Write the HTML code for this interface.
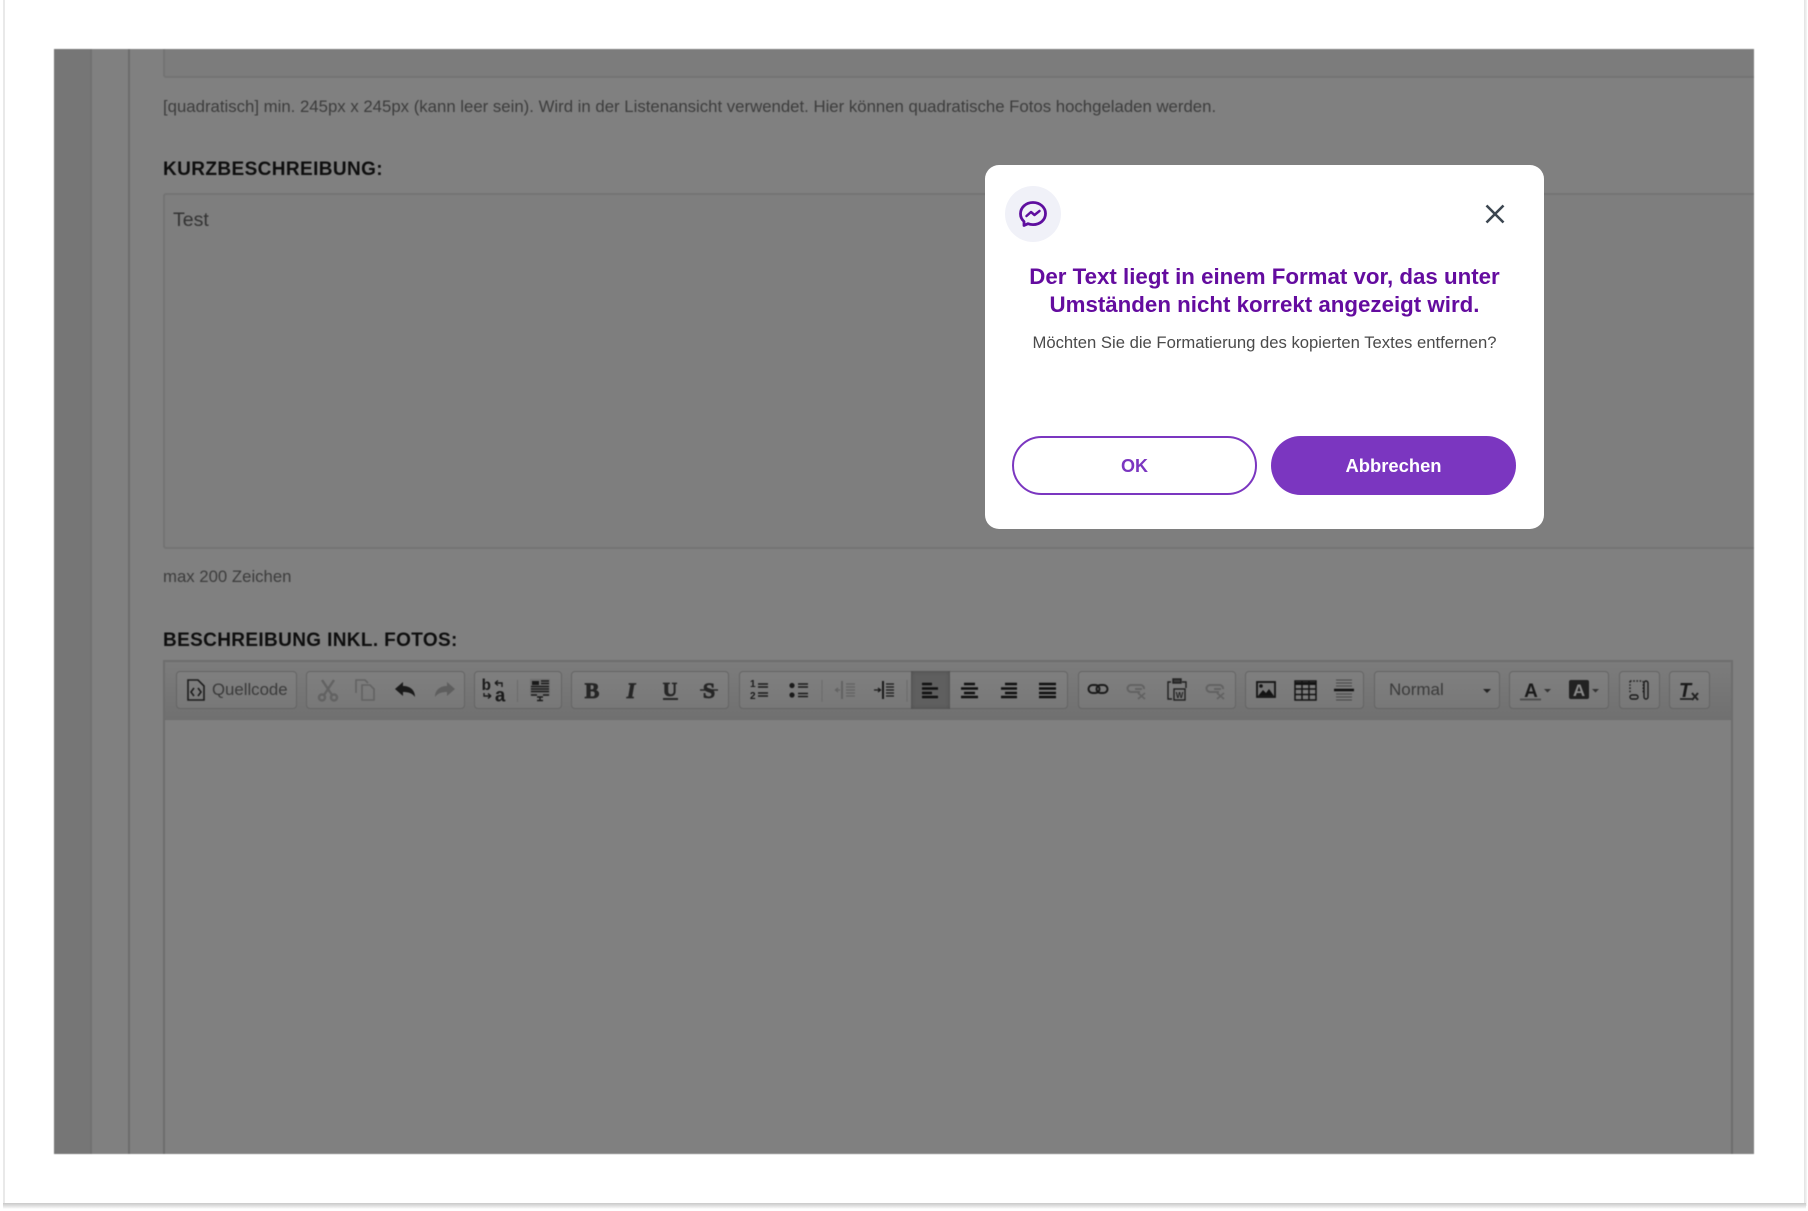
<!DOCTYPE html>
<html lang="de"><head><meta charset="utf-8"><title>Dialog</title>
<style>
html,body{margin:0;padding:0;width:1808px;height:1211px;overflow:hidden;background:#fff;font-family:"Liberation Sans",Arial,sans-serif}
.a{position:absolute;box-sizing:border-box}
.t{position:absolute;white-space:nowrap;line-height:20px}
.grp{position:absolute;top:671px;height:38px;box-sizing:border-box;border:1px solid #646464;border-radius:4px;background:linear-gradient(#7f7f7f,#787878)}
#bg{filter:blur(.4px)}
#mt{filter:blur(.25px)}
</style></head><body>
<div class="a" style="left:3px;top:0;width:2px;height:1204px;background:#e9e9e9"></div>
<div class="a" style="left:1804px;top:0;width:3px;height:1206px;background:linear-gradient(90deg,#e2e2e2,#f6f6f6)"></div>
<div class="a" style="left:3px;top:1203px;width:1803px;height:6px;background:linear-gradient(#c9c9c9,#e6e6e6 60%,#fff)"></div>

<div id="bg" class="a" style="left:0;top:0;width:1808px;height:1211px">
<div class="a" style="left:54px;top:49px;width:1700px;height:1105px;background:#808080;overflow:hidden">
  <div class="a" style="left:0;top:0;width:38px;height:1105px;background:#767676;border-right:2px solid #717171"></div>
  <div class="a" style="left:74px;top:0;width:2px;height:1105px;background:#6c6c6c"></div>
  <div class="a" style="left:109px;top:-5px;width:1600px;height:34px;background:#7c7c7c;border:2px solid #737373;border-radius:3px"></div>
  <div class="a" style="left:109px;top:144px;width:1600px;height:356px;background:#7e7e7e;border:2px solid #737373;border-radius:3px"></div>
</div>
<div class="t" style="left:163px;top:97px;font-size:16.78px;color:#3c3c3c">[quadratisch] min. 245px x 245px (kann leer sein). Wird in der Listenansicht verwendet. Hier können quadratische Fotos hochgeladen werden.</div>
<div class="t" style="left:163px;top:160px;font-size:19px;font-weight:bold;color:#0e0e0e;letter-spacing:.4px">KURZBESCHREIBUNG:</div>
<div class="t" style="left:173px;top:210px;font-size:19.5px;color:#333">Test</div>
<div class="t" style="left:163px;top:567px;font-size:16.75px;color:#3c3c3c">max 200 Zeichen</div>
<div class="t" style="left:163px;top:631px;font-size:19px;font-weight:bold;color:#0e0e0e;letter-spacing:.36px">BESCHREIBUNG INKL. FOTOS:</div>

<div class="a" style="left:163px;top:660px;width:1570px;height:61px;border:2px solid #6d6d6d;background:linear-gradient(#7c7c7c,#707070)"></div>
<div class="a" style="left:163px;top:720px;width:1570px;height:434px;border-left:2px solid #6d6d6d;border-right:2px solid #6d6d6d;background:#808080"></div>

<div class="grp" style="left:176px;width:121px"></div>
<div class="grp" style="left:306px;width:159px"></div>
<div class="grp" style="left:474px;width:88px"></div>
<div class="grp" style="left:571px;width:158px"></div>
<div class="grp" style="left:739px;width:329px"></div>
<div class="a" style="left:911px;top:671px;width:39px;height:38px;background:#5f5f5f;box-shadow:inset 0 0 4px #4a4a4a"></div>
<div class="grp" style="left:1078px;width:158px"></div>
<div class="grp" style="left:1245px;width:119px"></div>
<div class="grp" style="left:1374px;width:126px"></div>
<div class="grp" style="left:1509px;width:100px"></div>
<div class="grp" style="left:1619px;width:41px"></div>
<div class="grp" style="left:1669px;width:41px"></div>

<div class="t" style="left:212px;top:680px;font-size:16.8px;color:#3a3a3a">Quellcode</div>
<div class="t" style="left:1389px;top:680px;font-size:17px;color:#3a3a3a">Normal</div>

<svg class="a" style="left:0;top:0" width="1808" height="1211" viewBox="0 0 1808 1211" fill="none">
 <!-- source -->
 <g transform="translate(196,690)" stroke="#1c1c1c" stroke-width="1.6"><path d="M-8-10H2L8-4V10H-8Z"/><path d="M-2-2L-5 2L-2 6M2-2L5 2L2 6"/></g>
 <!-- cut -->
 <g transform="translate(328,690)" stroke="#626262" stroke-width="2.4"><path d="M-6-10L4 5M6-10L-4 5"/><circle cx="-6" cy="7.5" r="3"/><circle cx="6" cy="7.5" r="3"/></g>
 <!-- copy -->
 <g transform="translate(365,690)" stroke="#626262" stroke-width="1.6"><path d="M-9 3V-10H0L3-7"/><path d="M-3-5H5L9-1V10H-3Z"/></g>
 <!-- undo/redo -->
 <path transform="translate(405,690)" fill="#1a1a1a" d="M-10-1L-2-8V-4C5-4 10 0 10 7C7 3 3 2-2 2V6Z"/>
 <path transform="translate(445,690) scale(-1,1)" fill="#5e5e5e" d="M-10-1L-2-8V-4C5-4 10 0 10 7C7 3 3 2-2 2V6Z"/>
 <!-- bidi -->
 <g transform="translate(493,690)">
  <text x="-11.500" y="0" font-family="Liberation Mono" font-weight="bold" font-size="16" fill="#1a1a1a">b</text>
  <text x="1.500" y="11.500" font-family="Liberation Mono" font-weight="bold" font-size="19" fill="#1a1a1a">a</text>
  <path d="M2-7H9V-3M2-7L5-9.500M2-7L5-4.500M-9 3V6H-2M-2 6L-5 3.500M-2 6L-5 8.500" stroke="#1a1a1a" stroke-width="1.4"/>
 </g>
 <path d="M517.500 680V702" stroke="#6a6a6a" stroke-width="1"/>
 <!-- template -->
 <g transform="translate(540,689)"><rect x="-10" y="-10" width="20" height="17" fill="#6f6f6f"/><path d="M-8-8H-1V-4H-8Z" fill="#1a1a1a"/><path d="M1-8H9M1-5.500H9M-9-2.500H9M-9 0H9M-9 2.500H9" stroke="#1a1a1a" stroke-width="1.400"/><path d="M-9 6H-3M3 6H9M-3 8H3M0 8V11.500M-3 11.500H3" stroke="#1a1a1a" stroke-width="1.400"/></g>
 <!-- B I U S -->
 <g font-family="Liberation Serif" font-weight="bold" font-size="22" text-anchor="middle" fill="#262626" stroke="#262626" stroke-width=".8">
  <text x="592" y="698">B</text>
  <text x="631" y="698" font-style="italic">I</text>
  <text x="670" y="696" font-size="20">U</text>
  <text x="709" y="698">S</text>
 </g>
 <path d="M663 699H678" stroke="#262626" stroke-width="2"/>
 <path d="M700 690H718" stroke="#262626" stroke-width="1.600"/>
 <!-- lists -->
 <g transform="translate(759,690)"><text x="-9" y="-3" font-family="Liberation Sans" font-weight="bold" font-size="10" fill="#1a1a1a">1</text><text x="-9" y="9" font-family="Liberation Sans" font-weight="bold" font-size="10" fill="#1a1a1a">2</text><path d="M-1-6H9M-1-3H9M-1 3H9M-1 6H9" stroke="#1a1a1a" stroke-width="1.600"/></g>
 <g transform="translate(799,690)"><circle cx="-7" cy="-4.500" r="2.600" fill="#1a1a1a"/><circle cx="-7" cy="5" r="2.600" fill="#1a1a1a"/><path d="M-1-6H9M-1-3H9M-1 3.500H9M-1 6.500H9" stroke="#1a1a1a" stroke-width="1.600"/></g>
 <path d="M822 680V702M907 680V702" stroke="#6a6a6a"/>
 <g transform="translate(845,690)" stroke="#626262" stroke-width="1.300"><path d="M-3-9V9" stroke-width="2"/><path d="M1-6H10M1-3H10M1 0H10M1 3H10M1 6H10M-10 0H-5M-7-2L-9.500 0L-7 2"/></g>
 <g transform="translate(884,690)" stroke="#1a1a1a" stroke-width="1.300"><path d="M-1-9V9" stroke-width="2"/><path d="M2-6H10M2-3H10M2 0H10M2 3H10M2 6H10M-10 0H-4M-6-2L-3.500 0L-6 2"/></g>
 <!-- align -->
 <g stroke="#101010" stroke-width="2.500">
  <path d="M922 684H932M922 688.500H938M922 693H932M922 697H938"/>
  <path d="M964 684H975M961 688.500H978M964 693H975M961 697H978"/>
  <path d="M1005 684H1017M1001 688.500H1017M1005 693H1017M1001 697H1017"/>
  <path d="M1039 684H1056M1039 688.500H1056M1039 693H1056M1039 697H1056"/>
 </g>
 <!-- link -->
 <g transform="translate(1098,689)" stroke="#1a1a1a" stroke-width="2"><rect x="-9.500" y="-4" width="11" height="8" rx="4"/><rect x="-1.500" y="-4" width="11" height="8" rx="4"/></g>
 <g transform="translate(1137,689)" stroke="#626262" stroke-width="2"><path d="M3 3H-6A3.500 3.500 0 0 1-6-4H4A3.500 3.500 0 0 1 7 0M-2 0H5"/><path d="M1 4L8 10M8 4L1 10" stroke-width="1.800"/></g>
 <g transform="translate(1177,689)" stroke="#1f1f1f" stroke-width="1.400"><path d="M-6-7H-9V10H-5M5-7H9V-1"/><rect x="-4" y="-10" width="8" height="4" fill="#3a3a3a"/><rect x="-3" y="0" width="11" height="11"/><text x="2.500" y="9" font-family="Liberation Sans" font-weight="bold" font-size="8" text-anchor="middle" fill="#1f1f1f" stroke="none">W</text></g>
 <g transform="translate(1216,689)" stroke="#626262" stroke-width="2"><path d="M3 3H-6A3.500 3.500 0 0 1-6-4H4A3.500 3.500 0 0 1 7 0M-2 0H5"/><path d="M1 4L8 10M8 4L1 10" stroke-width="1.800"/></g>
 <!-- image -->
 <g transform="translate(1266,690)"><rect x="-9" y="-8" width="18" height="15" fill="#757575" stroke="#141414" stroke-width="1.800"/><circle cx="-5" cy="-4" r="1.800" fill="#141414"/><path d="M-8 6L-3 0L0 3L3-1L8 6Z" fill="#141414"/></g>
 <!-- table -->
 <g transform="translate(1305,690)" stroke="#141414" stroke-width="1.500"><rect x="-10" y="-9" width="21" height="19"/><path d="M-10-6.500H11" stroke-width="3"/><path d="M-10-1H11M-10 4.500H11M-3-9V10M4-9V10"/></g>
 <!-- hr -->
 <g transform="translate(1344,690)" stroke="#484848" stroke-width="1"><path d="M-8-10H8M-8-7H8M-8-4H8M-8 4H8M-8 7H8M-8 10H8"/><path d="M-10 0H10" stroke="#101010" stroke-width="2.400"/></g>
 <!-- combo arrow -->
 <path d="M1483 689H1491L1487 693Z" fill="#222"/>
 <!-- colors -->
 <text x="1531" y="697" font-family="Liberation Sans" font-weight="bold" font-size="19" text-anchor="middle" fill="#1a1a1a">A</text>
 <path d="M1520 699.500H1541" stroke="#4e4e4e" stroke-width="2"/>
 <path d="M1544 689H1551L1547.500 692.500Z" fill="#333"/>
 <rect x="1569" y="680" width="20" height="19" rx="2" fill="#222"/>
 <text x="1579" y="696" font-family="Liberation Sans" font-weight="bold" font-size="17" text-anchor="middle" fill="#8a8a8a">A</text>
 <path d="M1592 689H1599L1595.500 692.500Z" fill="#333"/>
 <!-- maximize -->
 <g transform="translate(1639,690)"><path d="M-9-9H4M-9-9V3" stroke="#222" stroke-width="1.500" stroke-dasharray="1.600 1.600"/><path d="M4-9V3" stroke="#222" stroke-width="1" stroke-dasharray="1.600 1.600"/><rect x="-9" y="5" width="8" height="4" rx="2" stroke="#1a1a1a" stroke-width="1.400"/><rect x="5" y="-9" width="4" height="18" rx="2" stroke="#1a1a1a" stroke-width="1.400"/></g>
 <!-- remove format -->
 <text x="1685" y="697" font-family="Liberation Sans" font-weight="bold" font-style="italic" font-size="20" text-anchor="middle" fill="#1a1a1a">T</text>
 <path d="M1680 699H1692" stroke="#1a1a1a" stroke-width="1.600"/>
 <path d="M1692 693L1698 700M1698 693L1692 700" stroke="#222" stroke-width="2"/>
</svg>
</div>

<!-- modal -->
<div class="a" style="left:984.500px;top:165px;width:559px;height:364px;background:#fff;border-radius:14px"></div>
<div class="a" style="left:1005px;top:186px;width:56px;height:56px;border-radius:50%;background:#f0f1f8"></div>
<svg class="a" style="left:1005px;top:186px" width="56" height="56" viewBox="0 0 56 56" fill="none">
 <path d="M28 16.500C20.800 16.500 15.500 21.500 15.500 27.800C15.500 31 16.800 33.600 19 35.500V39.500L23 37.700C24.500 38.300 26.200 38.600 28 38.600C35.200 38.600 40.500 33.800 40.500 27.500C40.500 21.500 35.200 16.500 28 16.500Z" stroke="#5f0f9f" stroke-width="2.800" stroke-linejoin="round"/>
 <path d="M21.500 30L26 26L29.500 29L34.500 25" stroke="#5f0f9f" stroke-width="2.500" stroke-linecap="round" stroke-linejoin="round"/>
</svg>
<svg class="a" style="left:1483px;top:202px" width="24" height="24" viewBox="0 0 24 24" fill="none"><path d="M3.500 3.500L20.500 20.500M20.500 3.500L3.500 20.500" stroke="#3c4650" stroke-width="2.600"/></svg>
<div id="mt">
<div class="t" style="left:985px;width:559px;top:263px;line-height:28px;height:56px;text-align:center;font-size:22.3px;font-weight:bold;color:#640c9f">Der Text liegt in einem Format vor, das unter<br>Umständen nicht korrekt angezeigt wird.</div>
<div class="t" style="left:985px;width:559px;top:333px;text-align:center;font-size:16.65px;color:#4a4a4a">Möchten Sie die Formatierung des kopierten Textes entfernen?</div>
</div>
<div class="a" style="left:1012px;top:436px;width:245px;height:59px;border:2.500px solid #7b36c0;border-radius:30px;background:#fff;color:#7b36c0;font-size:18px;font-weight:bold;text-align:center;line-height:56px">OK</div>
<div class="a" style="left:1271px;top:436px;width:245px;height:59px;border-radius:30px;background:#7b36c0;color:#fff;font-size:18.4px;font-weight:bold;text-align:center;line-height:60px">Abbrechen</div>
</body></html>
